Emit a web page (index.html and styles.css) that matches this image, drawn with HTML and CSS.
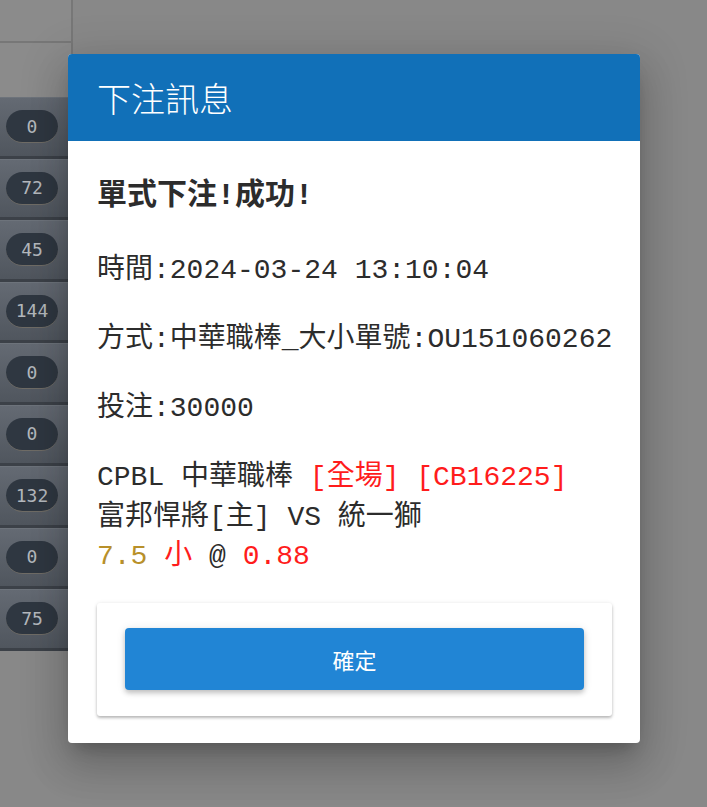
FILE: index.html
```html
<!DOCTYPE html>
<html lang="zh-Hant">
<head>
  <meta charset="UTF-8" />
  <meta name="viewport" content="width=device-width, initial-scale=1.0"/>
  <title>下注訊息</title>
  <link rel="stylesheet" href="styles.css">
</head>
<body>
  <div class="page">
    <div class="side">
      <div class="side-head">
        <div class="side-cell"></div>
      </div>
      <div class="row"><span class="pill">0</span></div>
      <div class="row"><span class="pill">72</span></div>
      <div class="row"><span class="pill">45</span></div>
      <div class="row"><span class="pill">144</span></div>
      <div class="row"><span class="pill">0</span></div>
      <div class="row"><span class="pill">0</span></div>
      <div class="row"><span class="pill">132</span></div>
      <div class="row"><span class="pill">0</span></div>
      <div class="row"><span class="pill">75</span></div>
    </div>
  </div>

  <div class="dialog">
    <div class="dialog-title">下注訊息</div>
    <div class="dialog-body">
      <h2 class="result">單式下注!成功!</h2>
      <p>時間:2024-03-24 13:10:04</p>
      <p>方式:中華職棒_大小單號:OU151060262</p>
      <p>投注:30000</p>
      <p class="match">
        CPBL 中華職棒 <span class="red">[全場] [CB16225]</span><br>
        富邦悍將[主] VS 統一獅<br>
        <span class="gold">7.5</span> <span class="red">小</span> @ <span class="red">0.88</span>
      </p>
      <div class="actions">
        <button class="ok">確定</button>
      </div>
    </div>
  </div>
</body>
</html>
```

FILE: styles.css
```css
* {
  box-sizing: border-box;
}
body {
  margin: 0;
  height: 807px;
  overflow: hidden;
  background: #888888;
  font-family: "Noto Sans CJK TC", sans-serif;
}
.page {
  display: flex;
}
.side {
  width: 73px;
}
.side-head {
  height: 97px;
  border-right: 2px solid #777777;
  background: #8b8b8b;
}
.side-cell {
  height: 43px;
  border-bottom: 2px solid #777777;
}
.row {
  height: 61.5px;
  display: flex;
  align-items: center;
  padding-left: 6px;
  background: linear-gradient(#646a73, #50565e);
  border-top: 1px solid #6d737b;
  border-bottom: 3px solid #3c4148;
}
.pill {
  width: 52px;
  height: 33px;
  border-radius: 17px;
  background: #2f3741;
  border-bottom: 1px solid #6f6c66;
  color: #b4b8bd;
  font-family: "DejaVu Sans Mono", monospace;
  font-size: 18px;
  display: flex;
  align-items: center;
  justify-content: center;
}

/* dialog */
.dialog {
  position: absolute;
  left: 68px;
  top: 54px;
  width: 572px;
  background: #fff;
  border-radius: 4px;
  overflow: hidden;
  box-shadow: 0 11px 15px -7px rgba(0,0,0,0.2), 0 24px 38px 3px rgba(0,0,0,0.14), 0 9px 46px 8px rgba(0,0,0,0.12);
}
.dialog-title {
  height: 87px;
  line-height: 87px;
  padding: 0 29px;
  background: #1170b8;
  color: #fff;
  font-size: 34px;
  font-weight: 300;
}
.dialog-body {
  padding: 34px 28px 27px 29px;
  font-family: "Liberation Mono", "Noto Sans CJK TC", monospace;
  font-size: 28px;
  color: #2c2c2c;
}
.result {
  margin: 0 0 34px;
  font-size: 30px;
  line-height: 42px;
  font-weight: bold;
}
.dialog-body p {
  margin: 0 0 29.5px;
  line-height: 39.5px;
  white-space: nowrap;
}
.dialog-body p.match {
  margin-bottom: 26px;
}
.red {
  color: #ff1c1c;
}
.gold {
  color: #b8902a;
}
.actions {
  padding: 25px 28px 26px;
  border-radius: 3px;
  box-shadow: 0 2px 3px rgba(0,0,0,0.25), 0 0 4px rgba(0,0,0,0.08);
}
.ok {
  width: 100%;
  height: 62px;
  border: none;
  border-radius: 4px;
  background: #2185d5;
  color: #fff;
  font-family: "Noto Sans CJK TC", sans-serif;
  font-size: 22px;
  box-shadow: 0 3px 5px rgba(0,0,0,0.2), 0 1px 10px rgba(0,0,0,0.1);
  cursor: pointer;
}
```
